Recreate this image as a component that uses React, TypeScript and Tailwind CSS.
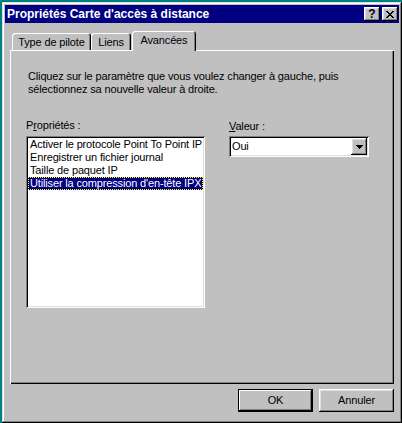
import React from 'react';

const raised =
  'shadow-[inset_-1px_-1px_#000,inset_1px_1px_#fff,inset_-2px_-2px_#808080,inset_2px_2px_#dfdfdf]';
const sunken =
  'shadow-[inset_1px_1px_#808080,inset_-1px_-1px_#fff,inset_2px_2px_#000,inset_-2px_-2px_#dfdfdf]';

const items = [
  'Activer le protocole Point To Point IP',
  'Enregistrer un fichier journal',
  'Taille de paquet IP',
  "Utiliser la compression d'en-tête IPX",
];

const Tab: React.FC<{ label: string; width: string; active?: boolean }> = ({
  label,
  width,
  active,
}) => (
  <div
    className={`${width} ${
      active ? 'relative z-10 h-[20px] mb-[-1px] ml-[1px]' : 'h-[17px]'
    } bg-[#c0c0c0] rounded-t-[3px] pt-[3px] text-center leading-[13px] shadow-[inset_1px_1px_#fff,inset_-1px_0_#000,inset_-2px_0_#808080]`}
  >
    {label}
  </div>
);

const App: React.FC = () => {
  return (
    <div className="w-[402px] h-[423px] bg-[#008080] pt-[2px] pl-[2px] font-['Liberation_Sans',Arial,sans-serif] text-[11px] tracking-[-0.15px] text-black">
      <div
        className={`w-[400px] h-[421px] bg-[#c0c0c0] p-[3px] flex flex-col shadow-[inset_-1px_-1px_#000,inset_1px_1px_#dfdfdf,inset_-2px_-2px_#808080,inset_2px_2px_#fff]`}
      >
        {/* title bar */}
        <div className="h-[18px] bg-[#000080] flex items-center pl-[2px] pr-[1px]">
          <span className="flex-1 text-white font-bold text-[12px] tracking-normal leading-[18px]">
            Propriétés Carte d'accès à distance
          </span>
          <div className="flex gap-[2px]">
            <div
              className={`w-[16px] h-[14px] bg-[#c0c0c0] ${raised} flex items-center justify-center font-bold text-[12px] leading-[14px] tracking-normal`}
            >
              ?
            </div>
            <div
              className={`w-[16px] h-[14px] bg-[#c0c0c0] ${raised} flex items-center justify-center`}
            >
              <svg width="8" height="7" viewBox="0 0 8 7" shapeRendering="crispEdges">
                <path d="M0 0h2v1h1v1h2v-1h1v-1h2v1h-1v1h-1v1h-1v1h1v1h1v1h1v1h-2v-1h-1v-1h-2v1h-1v1h-2v-1h1v-1h1v-1h1v-1h-1v-1h-1v-1h-1z" fill="#000" />
              </svg>
            </div>
          </div>
        </div>

        <div className="flex-1 flex flex-col px-[5px] pt-[8px]">
          {/* tabs */}
          <div className="flex items-end h-[19px] pl-[2px]">
            <Tab label="Type de pilote" width="w-[79px]" />
            <Tab label="Liens" width="w-[40px]" />
            <Tab label="Avancées" width="w-[64px]" active />
          </div>

          {/* panel */}
          <div className="h-[334px] bg-[#c0c0c0] shadow-[inset_1px_1px_#fff,inset_-1px_-1px_#000,inset_-2px_-2px_#808080] pt-[20px] pl-[16px]">
            <p className="pl-[2px] leading-[13px]">
              Cliquez sur le paramètre que vous voulez changer à gauche, puis
              <br />
              sélectionnez sa nouvelle valeur à droite.
            </p>

            <div className="flex gap-[24px] mt-[23px]">
              <div className="w-[179px]">
                <div className="leading-[13px] h-[13px]">
                  P<span className="underline">r</span>opriétés :
                </div>
                <div
                  className={`mt-[4px] h-[172px] bg-white p-[2px] ${sunken} overflow-hidden`}
                >
                  {items.map((item, i) => {
                    const selected = i === items.length - 1;
                    return (
                      <div
                        key={item}
                        className={`h-[13px] leading-[11px] pl-[1px] whitespace-nowrap overflow-hidden ${
                          selected
                            ? 'bg-[#000080] text-white border border-dotted border-[#ffff00]'
                            : 'border border-transparent'
                        }`}
                      >
                        {item}
                      </div>
                    );
                  })}
                </div>
              </div>

              <div className="w-[140px]">
                <div className="leading-[13px] h-[13px] mt-[1px]">
                  <span className="underline">V</span>aleur :
                </div>
                <div
                  className={`mt-[3px] h-[21px] bg-white p-[2px] flex items-center ${sunken}`}
                >
                  <span className="flex-1 pl-[1px] leading-[17px]">Oui</span>
                  <div
                    className={`w-[16px] h-[17px] bg-[#c0c0c0] ${raised} flex items-center justify-center`}
                  >
                    <svg width="7" height="4" viewBox="0 0 7 4" shapeRendering="crispEdges">
                      <path d="M0 0h7v1h-1v1h-1v1h-1v1h-1v-1h-1v-1h-1v-1h-1z" fill="#000" />
                    </svg>
                  </div>
                </div>
              </div>
            </div>
          </div>

          {/* buttons */}
          <div className="flex justify-end gap-[6px] mt-[5px]">
            <button className="w-[75px] h-[23px] bg-[#c0c0c0] border border-black shadow-[inset_-1px_-1px_#000,inset_1px_1px_#fff,inset_-2px_-2px_#808080] leading-[21px]">
              OK
            </button>
            <button
              className={`w-[75px] h-[23px] bg-[#c0c0c0] ${raised} leading-[23px]`}
            >
              Annuler
            </button>
          </div>
        </div>
      </div>
    </div>
  );
};

export default App;
